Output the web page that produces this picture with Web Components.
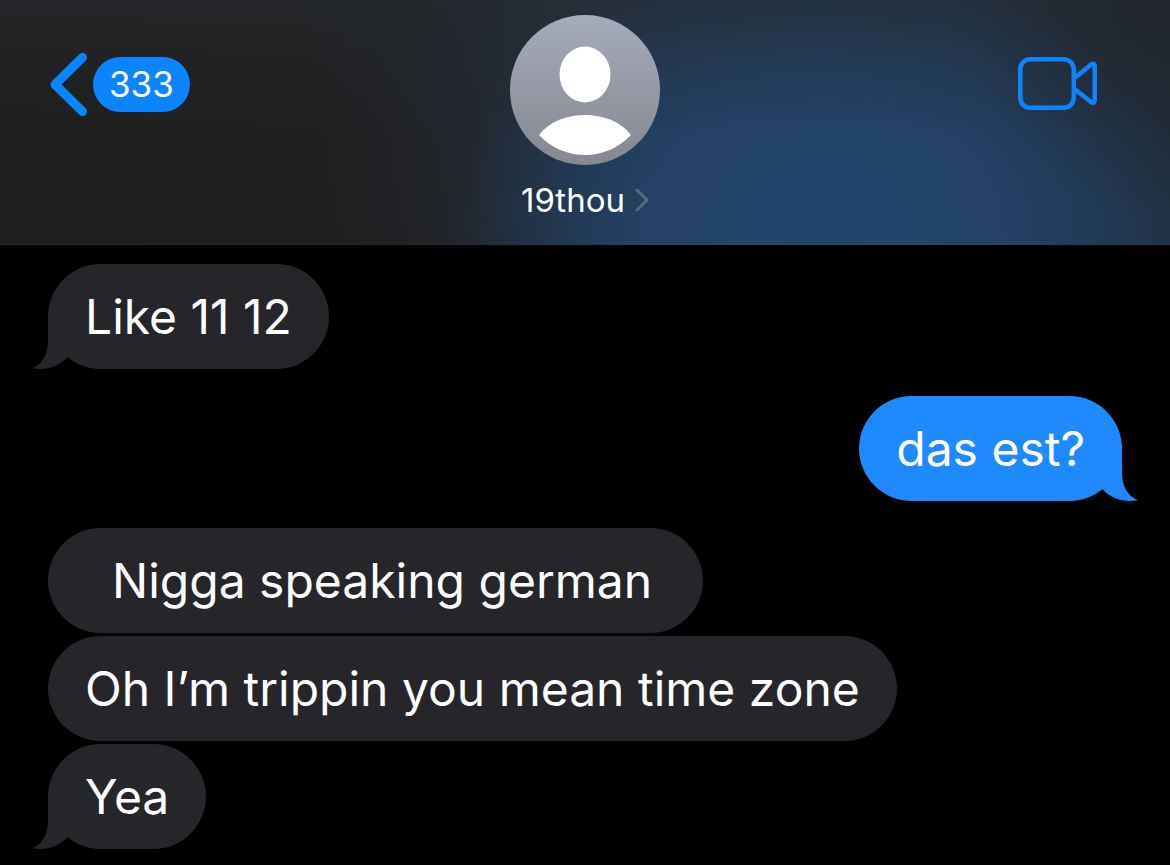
<!DOCTYPE html>
<html lang="en">
<head>
<meta charset="utf-8">
<meta name="viewport" content="width=device-width, initial-scale=1">
<title>Messages</title>
<style>
  body {
    margin: 0;
    min-height: 100vh;
    background: #000;
    color: #fff;
    font-family: Inter, "Liberation Sans", sans-serif;
  }
</style>
</head>
<body>
<chat-header>
  <back-button slot="back">333</back-button>
  <chat-contact>19thou</chat-contact>
  <video-button slot="action"></video-button>
</chat-header>
<chat-thread>
  <message-group>
    <chat-bubble tail>Like 11 12</chat-bubble>
  </message-group>
  <message-group sent>
    <chat-bubble sent tail>das est?</chat-bubble>
  </message-group>
  <message-group>
    <chat-bubble>&nbsp;&nbsp;Nigga speaking german&nbsp;</chat-bubble>
    <chat-bubble>Oh I’m trippin you mean time zone</chat-bubble>
    <chat-bubble tail>Yea</chat-bubble>
  </message-group>
</chat-thread>

<script>
class ChatHeader extends HTMLElement {
  constructor() {
    super();
    this.attachShadow({ mode: "open" });
  }

  connectedCallback() {
    this.shadowRoot.innerHTML = `
      <style>
        :host {
          display: block;
        }

        header {
          display: grid;
          grid-template-columns: 1fr auto 1fr;
          align-items: start;
          padding: 15px 50px 24px;
          border-bottom: 1px solid rgba(60, 60, 64, 0.3);
          background:
            radial-gradient(ellipse 18% 90% at 100% 0%, rgba(32, 36, 42, 0.8) 0%, rgba(32, 36, 42, 0) 100%),
            linear-gradient(180deg, rgba(38, 42, 46, 0.6) 0%, rgba(38, 42, 46, 0.25) 25%, rgba(38, 42, 46, 0) 55%),
            radial-gradient(ellipse 32% 115% at 70% 95%, #234469 0%, rgba(35, 68, 105, 0.85) 45%, rgba(35, 68, 105, 0.35) 75%, rgba(35, 68, 105, 0) 100%),
            linear-gradient(80deg, #1f1f1f 0%, #202021 28%, #22262c 40%, #24364b 54%, #233b57 70%, #22364c 88%, #212e3d 100%);
          background-origin: border-box;
        }

        .side {
          display: flex;
          padding-top: 38px;
        }

        .end {
          justify-content: flex-end;
          padding-right: 22px;
        }
      </style>
      <header>
        <div class="side"><slot name="back"></slot></div>
        <slot></slot>
        <div class="side end"><slot name="action"></slot></div>
      </header>
    `;
  }
}

class BackButton extends HTMLElement {
  constructor() {
    super();
    this.attachShadow({ mode: "open" });
  }

  connectedCallback() {
    this.shadowRoot.innerHTML = `
      <style>
        :host {
          display: block;
        }

        button {
          display: flex;
          align-items: center;
          gap: 6px;
          padding: 0;
          border: 0;
          background: none;
          color: #fff;
          font: inherit;
          cursor: pointer;
        }

        svg {
          display: block;
        }

        .count {
          padding: 0 16px;
          border-radius: 28px;
          background: #0a84ff;
          font-size: 35px;
          line-height: 55px;
        }
      </style>
      <button type="button">
        <svg width="37" height="63" viewBox="0 0 37 63" fill="none" aria-hidden="true">
          <path d="M32.5 4.5 5 31.5 32.5 58.5" stroke="#0a84ff" stroke-width="9" stroke-linecap="round" stroke-linejoin="round"/>
        </svg>
        <span class="count"><slot></slot></span>
      </button>
    `;
  }
}

class ChatContact extends HTMLElement {
  constructor() {
    super();
    this.attachShadow({ mode: "open" });
  }

  connectedCallback() {
    this.shadowRoot.innerHTML = `
      <style>
        :host {
          display: block;
        }

        button {
          display: flex;
          flex-direction: column;
          align-items: center;
          gap: 15px;
          padding: 0;
          border: 0;
          background: none;
          color: #fff;
          font: inherit;
          cursor: pointer;
        }

        svg {
          display: block;
        }

        .name {
          display: flex;
          align-items: center;
          gap: 10px;
          font-size: 33px;
          line-height: 40px;
        }
      </style>
      <button type="button">
        <svg width="150" height="150" viewBox="0 0 150 150" aria-hidden="true">
          <defs>
            <linearGradient id="shade" x1="0" y1="0" x2="0" y2="1">
              <stop offset="0" stop-color="#a5abb9"/>
              <stop offset="1" stop-color="#858891"/>
            </linearGradient>
          </defs>
          <circle cx="75" cy="75" r="75" fill="url(#shade)"/>
          <ellipse cx="75" cy="59.5" rx="25.5" ry="28" fill="#fff"/>
          <path d="M29 120C40 106 57 100 75 100S110 106 121 120C109 133 92 140 75 140S41 133 29 120Z" fill="#fff"/>
        </svg>
        <span class="name">
          <slot></slot>
          <svg width="14" height="24" viewBox="0 0 14 24" fill="none" aria-hidden="true">
            <path d="M2 2 12 12 2 22" stroke="#53697f" stroke-width="3" stroke-linecap="round" stroke-linejoin="round"/>
          </svg>
        </span>
      </button>
    `;
  }
}

class VideoButton extends HTMLElement {
  constructor() {
    super();
    this.attachShadow({ mode: "open" });
  }

  connectedCallback() {
    this.shadowRoot.innerHTML = `
      <style>
        :host {
          display: block;
        }

        button {
          display: block;
          padding: 4px 0;
          border: 0;
          background: none;
          cursor: pointer;
        }

        svg {
          display: block;
        }
      </style>
      <button type="button" aria-label="Video call">
        <svg width="80" height="53" viewBox="0 0 80 53" fill="none" stroke="#0a84ff" stroke-width="4.5" stroke-linejoin="round" aria-hidden="true">
          <rect x="2.25" y="2.25" width="53.5" height="48.5" rx="10"/>
          <path d="M56 21.5 73 7.5Q76.75 5.5 76.75 9V43Q76.75 47 73 45L56 31.5"/>
        </svg>
      </button>
    `;
  }
}

class ChatThread extends HTMLElement {
  constructor() {
    super();
    this.attachShadow({ mode: "open" });
  }

  connectedCallback() {
    this.shadowRoot.innerHTML = `
      <style>
        :host {
          display: block;
        }

        main {
          display: flex;
          flex-direction: column;
          gap: 27px;
          padding: 19px 48px 16px;
        }
      </style>
      <main><slot></slot></main>
    `;
  }
}

class MessageGroup extends HTMLElement {
  constructor() {
    super();
    this.attachShadow({ mode: "open" });
  }

  connectedCallback() {
    this.shadowRoot.innerHTML = `
      <style>
        :host {
          display: flex;
          flex-direction: column;
          align-items: flex-start;
          gap: 3px;
        }

        :host([sent]) {
          align-items: flex-end;
        }
      </style>
      <slot></slot>
    `;
  }
}

class ChatBubble extends HTMLElement {
  constructor() {
    super();
    this.attachShadow({ mode: "open" });
  }

  connectedCallback() {
    this.shadowRoot.innerHTML = `
      <style>
        :host {
          --fill: #26252a;
          display: block;
          position: relative;
          max-width: 85%;
          box-sizing: border-box;
          padding: 22px 37px;
          border-radius: 53px;
          background: var(--fill);
          font-size: 48px;
          line-height: 61px;
        }

        :host([sent]) {
          --fill: #1f8aff;
        }

        .tail {
          display: none;
          position: absolute;
          left: -17px;
          bottom: 0;
          fill: var(--fill);
        }

        :host([tail]) .tail {
          display: block;
        }

        :host([sent]) .tail {
          left: auto;
          right: -17px;
          transform: scaleX(-1);
        }

        .text {
          position: relative;
        }
      </style>
      <svg class="tail" width="50" height="55" viewBox="-17 50 50 55" aria-hidden="true">
        <path d="M0 50V76C0 90-5 100-16 104C-3 107 10 103 20 93L32 80V50Z"/>
      </svg>
      <span class="text"><slot></slot></span>
    `;
  }
}

customElements.define("chat-header", ChatHeader);
customElements.define("back-button", BackButton);
customElements.define("chat-contact", ChatContact);
customElements.define("video-button", VideoButton);
customElements.define("chat-thread", ChatThread);
customElements.define("message-group", MessageGroup);
customElements.define("chat-bubble", ChatBubble);
</script>
</body>
</html>
